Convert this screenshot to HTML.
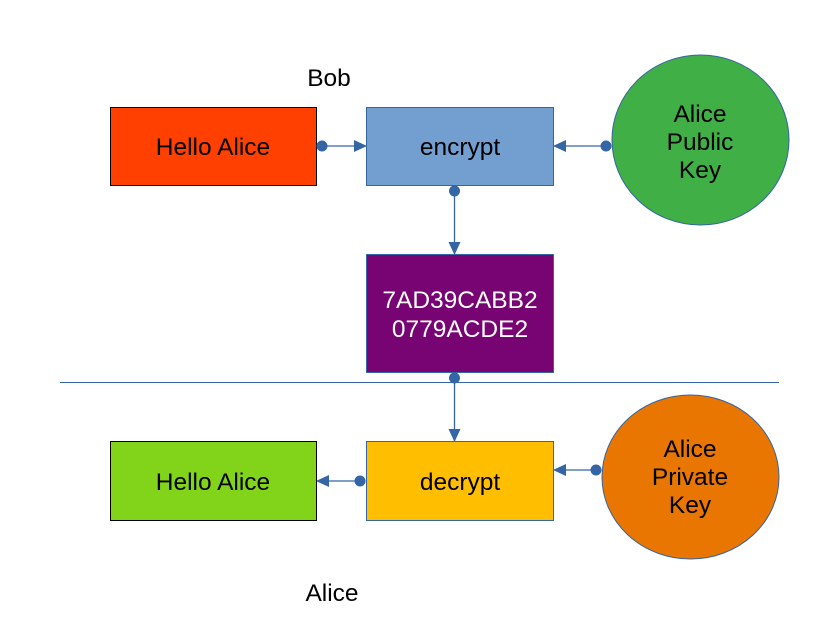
<!DOCTYPE html>
<html><head><style>body{margin:0;background:#fff}svg{display:block}text{font-family:"Liberation Sans",sans-serif;font-size:24.5px;text-anchor:middle}</style></head><body>
<svg width="835" height="633" viewBox="0 0 835 633">
<defs><marker id="a" markerWidth="13" markerHeight="12" refX="12" refY="6" orient="auto" markerUnits="userSpaceOnUse"><path d="M0,0L13,6L0,12Z" fill="#3465a4"/></marker></defs>
<rect width="835" height="633" fill="#fff"/>
<text x="329" y="86">Bob</text>
<text x="332" y="601">Alice</text>
<rect x="110.5" y="107.5" width="206" height="78" fill="#ff4000" stroke="#000"/>
<text x="213" y="155">Hello Alice</text>
<rect x="366.5" y="107.5" width="187" height="78" fill="#729fcf" stroke="#3465a4"/>
<text x="460" y="155">encrypt</text>
<ellipse cx="700.5" cy="140" rx="88.5" ry="85" fill="#3faf46" stroke="#3465a4"/>
<text x="700" y="122">Alice</text><text x="700" y="150">Public</text><text x="700" y="178">Key</text>
<rect x="366.5" y="254.5" width="187" height="118" fill="#780373" stroke="#3465a4"/>
<text x="460" y="308" fill="#fff">7AD39CABB2</text><text x="460" y="337" fill="#fff">0779ACDE2</text>
<line x1="60" y1="382.5" x2="779" y2="382.5" stroke="#3465a4"/>
<rect x="110.5" y="441.5" width="206" height="79" fill="#81d41a" stroke="#000"/>
<text x="213" y="490">Hello Alice</text>
<rect x="366.5" y="441.5" width="187" height="79" fill="#ffbf00" stroke="#3465a4"/>
<text x="460" y="490">decrypt</text>
<ellipse cx="690.5" cy="477" rx="88.5" ry="82" fill="#e87600" stroke="#3465a4"/>
<text x="690" y="457">Alice</text><text x="690" y="485">Private</text><text x="690" y="513">Key</text>
<g stroke="#3465a4" stroke-width="1.3" fill="none">
<line x1="322" y1="146" x2="366" y2="146" marker-end="url(#a)"/>
<line x1="606" y1="146" x2="554" y2="146" marker-end="url(#a)"/>
<line x1="454.5" y1="191" x2="454.5" y2="254" marker-end="url(#a)"/>
<line x1="454.5" y1="378" x2="454.5" y2="441" marker-end="url(#a)"/>
<line x1="360" y1="481" x2="317" y2="481" marker-end="url(#a)"/>
<line x1="596" y1="470" x2="554" y2="470" marker-end="url(#a)"/>
</g>
<g fill="#3465a4">
<circle cx="322" cy="146" r="5.5"/><circle cx="606" cy="146" r="5.5"/><circle cx="454.5" cy="191" r="5.5"/><circle cx="454.5" cy="378" r="5.5"/><circle cx="360" cy="481" r="5.5"/><circle cx="596" cy="470" r="5.5"/>
</g>
</svg>
</body></html>
